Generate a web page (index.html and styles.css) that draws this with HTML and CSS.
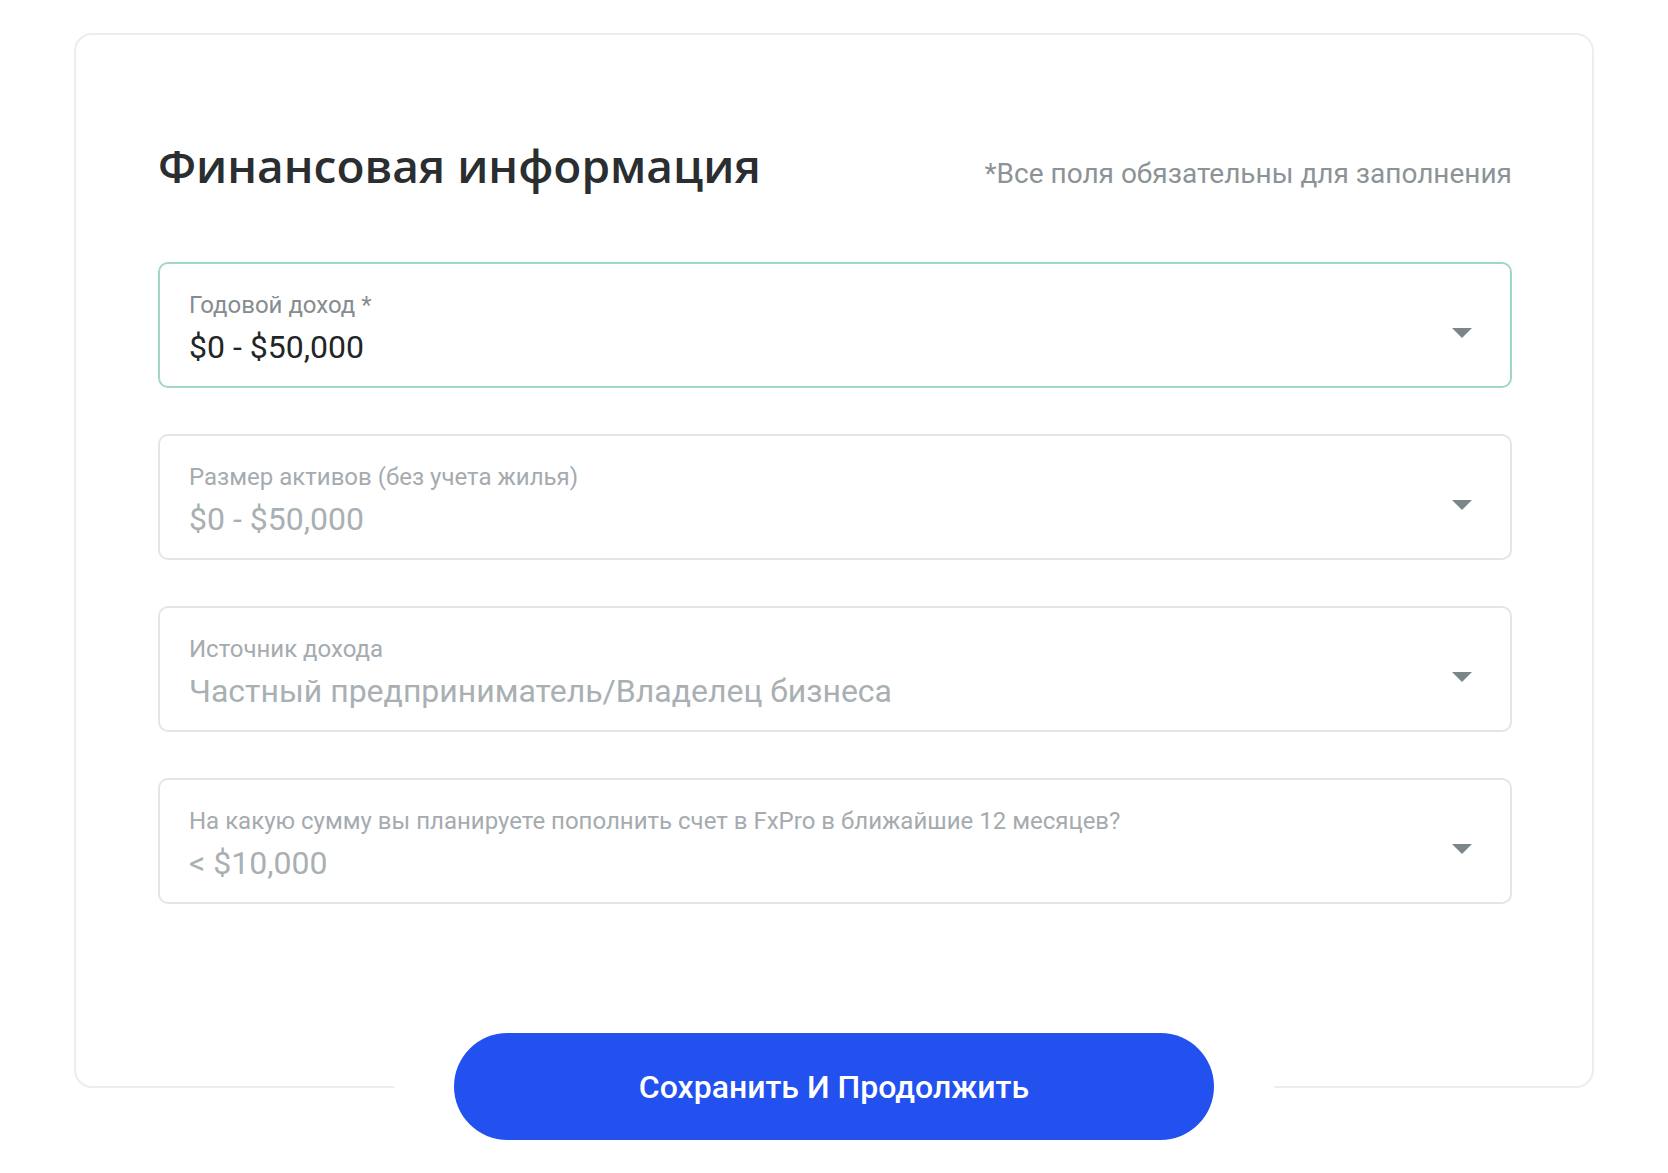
FILE: index.html
```html
<!doctype html>
<html lang="ru">
    <head>
        <meta charset="utf-8">
        <title>Финансовая информация</title>
        <link rel="stylesheet" href="styles.css">
    </head>
    <body>
        <div class="wrap">
            <div class="card">
                <div class="head">
                    <h1>Финансовая информация</h1>
                    <span class="note">*Все поля обязательны для заполнения</span>
                </div>
                <div class="field active">
                    <div class="text">
                        <span class="label">Годовой доход *</span>
                        <span class="value">$0 - $50,000</span>
                    </div>
                    <span class="arrow"></span>
                </div>
                <div class="field">
                    <div class="text">
                        <span class="label">Размер активов (без учета жилья)</span>
                        <span class="value">$0 - $50,000</span>
                    </div>
                    <span class="arrow"></span>
                </div>
                <div class="field">
                    <div class="text">
                        <span class="label">Источник дохода</span>
                        <span class="value">Частный предприниматель/Владелец бизнеса</span>
                    </div>
                    <span class="arrow"></span>
                </div>
                <div class="field">
                    <div class="text">
                        <span class="label">На какую сумму вы планируете пополнить счет в FxPro в ближайшие 12 месяцев?</span>
                        <span class="value">&lt; $10,000</span>
                    </div>
                    <span class="arrow"></span>
                </div>
            </div>
            <div class="foot">
                <button class="save">Сохранить И Продолжить</button>
            </div>
        </div>
    </body>
</html>
```
FILE: styles.css
```css
body{margin:0;background:#fff;font-family:Roboto,"Noto Sans",sans-serif;}
.wrap{width:1520px;margin:33px 0 40px 74px;}
.card{padding:0 80px 135px 82px;border:2px solid #ededee;border-radius:18px;}
.head{display:flex;justify-content:space-between;align-items:baseline;padding-top:100px;margin-bottom:67px;}
.head h1{margin:0;font:600 46px/60px "Open Sans","Noto Sans",sans-serif;color:#2a2e30;}
.note{font-size:28px;color:#8c9397;}
.field{display:flex;align-items:center;justify-content:space-between;box-sizing:border-box;height:126px;margin-bottom:46px;padding:0 38px 0 29px;border:2px solid #e3e6e7;border-radius:10px;}
.field:last-child{margin-bottom:47px;}
.field.active{border-color:#a3d6cb;}
.field .text{display:flex;flex-direction:column;align-self:flex-start;padding-top:25px;}
.field .label{font-size:24px;line-height:32px;color:#a5abaf;}
.field .value{font-size:32px;line-height:44px;color:#a9b0b3;margin-top:4px;}
.field.active .label{color:#868c90;}
.field.active .value{color:#222526;}
.arrow{width:0;height:0;border-left:10px solid transparent;border-right:10px solid transparent;border-top:10px solid #7b868b;margin-top:15px;}
.foot{display:flex;justify-content:center;width:880px;margin:-55px auto 0;background:#fff;}
.save{width:760px;height:107px;border:0;border-radius:54px;background:#2251f0;color:#fff;font:500 32px Roboto,sans-serif;cursor:pointer;}
```
